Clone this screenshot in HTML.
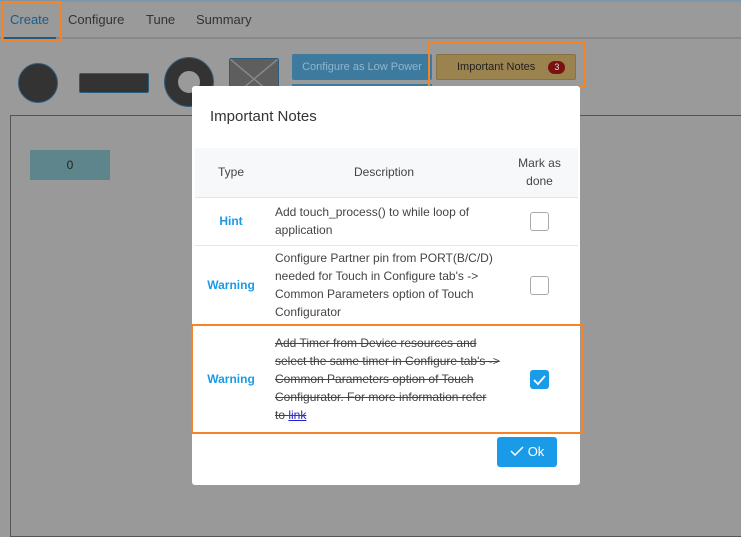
<!DOCTYPE html><html><head><style>
body{margin:0;width:741px;height:530px;background:#9a9a9a;font-family:"Liberation Sans",sans-serif;position:relative;overflow:hidden}
.a{position:absolute}
.tab{position:absolute;top:12px;font-size:13px;color:#333}
td,th{font-size:12px;color:#444}
</style></head><body>
<div class="a" style="left:0;top:0;width:741px;height:2px;background:#7e96aa"></div>
<div class="a" style="left:0;top:37px;width:741px;height:2px;background:#888"></div>
<div class="tab" style="left:10px;color:#1a5c8a">Create</div>
<div class="a" style="left:4px;top:37px;width:52px;height:2px;background:#1a5c8a"></div>
<div class="tab" style="left:68px">Configure</div>
<div class="tab" style="left:146px">Tune</div>
<div class="tab" style="left:196px">Summary</div>
<div class="a" style="left:1px;top:1px;width:57px;height:36px;border:2px solid #f58426"></div>
<div class="a" style="left:18px;top:63px;width:38px;height:38px;border-radius:50%;background:#333;border:1px solid #2a5c80"></div>
<div class="a" style="left:79px;top:73px;width:68px;height:18px;background:#333;border:1px solid #2a5c80;border-radius:2px"></div>
<div class="a" style="left:165px;top:58px;width:22px;height:22px;border-radius:50%;border:13px solid #333;box-shadow:0 0 0 1px #2a5c80"></div>
<div class="a" style="left:229px;top:58px;width:48px;height:40px;background:#5e5e5e;border:1px solid #2a5c80;border-radius:2px;overflow:hidden"><svg width="48" height="40"><path d="M0 0L48 40M48 0L0 40" stroke="#888" stroke-width="1.5"/></svg></div>
<div class="a" style="left:292px;top:54px;width:140px;height:26px;background:#3e7a9d;border-radius:2px;color:#8fb7cc;font-size:11px;text-align:center;line-height:26px">Configure as Low Power</div>
<div class="a" style="left:292px;top:84px;width:140px;height:10px;background:#3e7a9d"></div>
<div class="a" style="left:436px;top:54px;width:140px;height:26px;background:#9b8350;border:1px solid #8a7240;box-sizing:border-box;border-radius:2px;font-size:11px;color:#222;line-height:24px;padding-left:20px">Important Notes <span style="display:inline-block;margin-left:10px;background:#7a1010;color:#ddd;border-radius:8px;font-size:9px;padding:0 6px;line-height:13px">3</span></div>
<div class="a" style="left:428px;top:42px;width:154px;height:42px;border:2px solid #f58426"></div>
<div class="a" style="left:10px;top:115px;width:740px;height:420px;border:1px solid #555;background:#999"></div>
<div class="a" style="left:30px;top:150px;width:80px;height:30px;background:#5f858c;font-size:12px;text-align:center;line-height:30px;color:#222">0</div>
<div class="a" style="left:192px;top:86px;width:388px;height:399px;background:#fff;border-radius:3px">
<div class="a" style="left:18px;top:22px;font-size:15px;color:#333">Important Notes</div>
<table class="a" style="left:3px;top:62px;width:383px;border-collapse:collapse">
<tr style="background:#f7f8fa;height:49px"><th style="width:70px;font-weight:normal">Type</th><th style="font-weight:normal;width:232px">Description</th><th style="font-weight:normal;line-height:18px">Mark as<br>done</th></tr>
<tr style="height:48px;border-top:1px solid #e5e5e5"><td style="text-align:center;color:#1a9be8;font-weight:bold">Hint</td><td style="line-height:18px;padding-left:8px">Add touch_process() to while loop of application</td><td><div style="margin:0 auto;width:17px;height:17px;border:1px solid #aaa;border-radius:3px"></div></td></tr>
<tr style="height:80px;border-top:1px solid #e5e5e5"><td style="text-align:center;color:#1a9be8;font-weight:bold">Warning</td><td style="line-height:18px;padding-left:8px">Configure Partner pin from PORT(B/C/D) needed for Touch in Configure tab's -> Common Parameters option of Touch Configurator</td><td><div style="margin:0 auto;width:17px;height:17px;border:1px solid #aaa;border-radius:3px"></div></td></tr>
<tr style="height:108px;border-top:1px solid #e5e5e5"><td style="text-align:center;color:#1a9be8;font-weight:bold">Warning</td><td style="line-height:18px;padding-left:8px;text-decoration:line-through;white-space:nowrap">Add Timer from Device resources and<br>select the same timer in Configure tab's -><br>Common Parameters option of Touch<br>Configurator. For more information refer<br>to <span style="color:#2222cc;text-decoration:underline">link</span></td><td><div style="margin:0 auto;width:19px;height:19px;background:#1a9be8;border-radius:3px"><svg width="19" height="19"><path d="M4 10l4 4 7-8" stroke="#fff" stroke-width="1.8" fill="none"/></svg></div></td></tr>
</table>
<div class="a" style="left:-1px;top:238px;width:388px;height:106px;border:2px solid #f58426"></div>
<div class="a" style="left:305px;top:351px;width:60px;height:30px;background:#1a9be8;border-radius:3px;color:#fff;font-size:13px;line-height:30px;text-align:center"><svg width="14" height="10" style="margin-right:4px"><path d="M1 5l4 4 8-8" stroke="#fff" stroke-width="1.5" fill="none"/></svg>Ok</div>
</div>
</body></html>
